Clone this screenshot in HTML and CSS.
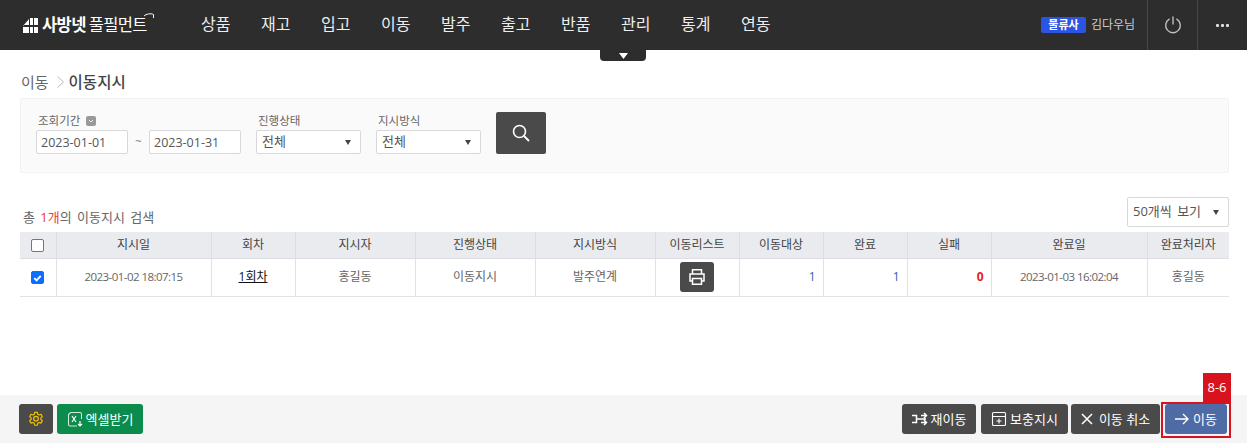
FILE: index.html
```html
<!DOCTYPE html>
<html lang="ko">
<head>
<meta charset="utf-8">
<title>이동지시</title>
<link rel="stylesheet" href="styles.css">
</head>
<body>
<header class="top">
  <div class="logo">
    <svg class="logo-mark" viewBox="0 0 16 15" width="16" height="15"><path fill="#fff" d="M0 8 6 1v6H0Zm0 1h6v6H0Zm7-9h3v7H7Zm0 9h3v6H7Zm4-9h4v7h-4Zm0 9h4v6h-4Z"/></svg>
    <b class="logo-a">사방넷</b><span class="logo-b">풀필먼트</span>
    <svg class="logo-hook" viewBox="0 0 12 9" width="12" height="9"><path fill="none" stroke="#fff" d="M1 3C3 1 8 0 10.500 1.500V5"/></svg>
  </div>
  <nav class="menu">
    <a>상품</a><a>재고</a><a>입고</a><a>이동</a><a>발주</a><a>출고</a><a>반품</a><a>관리</a><a>통계</a><a>연동</a>
  </nav>
  <div class="user">
    <span class="tag">물류사</span><span class="name">김다우님</span>
    <span class="iconcell">
      <svg viewBox="0 0 18 18" width="18" height="18"><path fill="none" stroke="#bdbdbd" stroke-width="1.400" stroke-linecap="round" d="M5.200 3.200a7.300 7.300 0 1 0 7.600 0M9 1v7"/></svg>
    </span>
    <span class="iconcell dots"><i></i><i></i><i></i></span>
  </div>
  <span class="fold"><svg viewBox="0 0 9 6" width="9" height="6"><path fill="#fff" d="M0 0h9L4.500 6Z"/></svg></span>
</header>

<main class="page">
  <div class="crumb"><span>이동</span><svg viewBox="0 0 7 12" width="7" height="12"><path fill="none" stroke="#bbb" d="m.5.500 6 5.500-6 5.500"/></svg><b>이동지시</b></div>

  <section class="search">
    <div class="field">
      <label>조회기간 <svg class="chev" viewBox="0 0 10 10" width="10" height="10"><rect width="10" height="10" rx="2" fill="#999"/><path d="m3 4 2 2 2-2" fill="none" stroke="#fff" stroke-width=".8"/></svg></label>
      <div class="dates"><span class="input">2023-01-01</span><span class="tilde">~</span><span class="input">2023-01-31</span></div>
    </div>
    <div class="field"><label>진행상태</label><span class="select">전체<em></em></span></div>
    <div class="field"><label>지시방식</label><span class="select">전체<em></em></span></div>
    <button class="go"><svg viewBox="0 0 18 18" width="18" height="18"><circle cx="7.500" cy="7.500" r="6" fill="none" stroke="#fff" stroke-width="1.600"/><path d="m12 12 5 5" stroke="#fff" stroke-width="1.800"/></svg></button>
  </section>

  <div class="listbar">
    <p class="count">총 <span>1개</span>의 이동지시 검색</p>
    <span class="select per">50개씩 보기<em></em></span>
  </div>

  <table class="grid">
    <colgroup>
      <col class="c0"><col class="c1"><col class="c2"><col class="c3"><col class="c3"><col class="c3"><col class="c4"><col class="c4"><col class="c4"><col class="c4"><col class="c5"><col class="c6">
    </colgroup>
    <thead>
      <tr><th><span class="chk"></span></th><th>지시일</th><th>회차</th><th>지시자</th><th>진행상태</th><th>지시방식</th><th>이동리스트</th><th>이동대상</th><th>완료</th><th>실패</th><th>완료일</th><th>완료처리자</th></tr>
    </thead>
    <tbody>
      <tr>
        <td><span class="chk on"><svg viewBox="0 0 12 12" width="12" height="12"><path d="m2.500 6.200 2.500 2.500 4.500-5" fill="none" stroke="#fff" stroke-width="2"/></svg></span></td>
        <td class="tight">2023-01-02 18:07:15</td>
        <td><a class="link">1회차</a></td>
        <td>홍길동</td><td>이동지시</td><td>발주연계</td>
        <td><span class="print"><svg viewBox="0 0 18 18" width="18" height="18"><path fill="none" stroke="#fff" stroke-width="1.500" d="M4.500 6V1.800h9V6M4.500 13H2V6h14v7h-2.500M4.500 10.500h9v5.700h-9z"/></svg></span></td>
        <td class="num">1</td><td class="num">1</td><td class="num fail">0</td>
        <td class="tight">2023-01-03 16:02:04</td><td>홍길동</td>
      </tr>
    </tbody>
  </table>
</main>

<footer class="foot">
  <div class="group">
    <button class="btn gear"><svg viewBox="0 0 18 18" width="16" height="16"><path fill="none" stroke="#f5c400" stroke-width="1.300" stroke-linejoin="round" d="M7.500 1.500h3l.5 2.200 1.500.8 2.100-.8 1.500 2.600L14.500 7.800v1.700l1.600 1.500-1.500 2.600-2.100-.7-1.500.9-.5 2.200h-3l-.5-2.200-1.500-.9-2.100.7L1.900 11l1.600-1.500V7.800L1.900 6.300l1.500-2.600 2.100.8L7 3.700Z"/><circle cx="9" cy="8.700" r="2.600" fill="none" stroke="#f5c400" stroke-width="1.300"/></svg></button>
    <button class="btn excel"><svg viewBox="0 0 16 16" width="16" height="16"><path fill="none" stroke="#cfe8d9" stroke-width="1.100" d="M10 15H3a1.500 1.500 0 0 1-1.500-1.500v-10L3.500 1.500H13A1.500 1.500 0 0 1 14.500 3v5"/><path fill="none" stroke="#fff" stroke-width="1.200" d="m5 5 4 6M9 5l-4 6M13 10v5M11 13l2 2 2-2"/></svg>엑셀받기</button>
  </div>
  <div class="group right">
    <button class="btn dark b1"><svg viewBox="0 0 16 14" width="16" height="14"><path fill="none" stroke="#fff" stroke-width="1.500" d="M0 3.500h4.500v7H0M4.500 7H14M9 3.500h5M9 10.500h5M12 1l2.500 2.500L12 6M12 8l2.500 2.500L12 13"/></svg>재이동</button>
    <button class="btn dark b2"><svg viewBox="0 0 16 16" width="16" height="16"><path fill="none" stroke="#fff" stroke-width="1.100" d="M1.500 5.500h13v8a1 1 0 0 1-1 1h-11a1 1 0 0 1-1-1v-11a1 1 0 0 1 1-1h11a1 1 0 0 1 1 1v3M8 7.500v5M5.500 10h5"/></svg>보충지시</button>
    <button class="btn dark b3"><svg viewBox="0 0 12 12" width="12" height="12"><path stroke="#fff" stroke-width="1.500" d="m1 1 10 10M11 1 1 11"/></svg>이동 취소</button>
    <div class="mark">
      <span class="badge">8-6</span>
      <button class="btn blue"><svg viewBox="0 0 14 12" width="14" height="12"><path fill="none" stroke="#fff" stroke-width="1.400" d="M0 6h13M8 1l5 5-5 5"/></svg>이동</button>
    </div>
  </div>
</footer>
</body>
</html>
```
FILE: styles.css
```css
* { box-sizing: border-box; }
html, body { margin: 0; height: 100%; }
body {
  display: flex;
  flex-direction: column;
  height: 443px;
  overflow: hidden;
  background: #fff;
  color: #555;
  font: 12px/1.2 "Open Sans", "Noto Sans CJK KR", sans-serif;
}
.top {
  position: relative;
  flex: none;
  height: 50px;
  display: flex;
  align-items: center;
  padding-left: 23px;
  background: #2d2d2d;
  color: #fff;
}
.logo { position: relative; display: flex; align-items: center; width: 178px; height: 50px; }
.logo-mark { margin-right: 3px; }
.logo-a { font-size: 16.500px; font-weight: 700; letter-spacing: -.6px; margin-right: 3px; }
.logo-b { font-size: 16.500px; font-weight: 400; letter-spacing: -.7px; }
.logo-hook { position: absolute; left: 120px; top: 13px; }
.menu { display: flex; gap: 30px; font-size: 16px; color: #eee; }
.menu a { display: block; width: 30px; white-space: nowrap; }
.user { margin-left: auto; display: flex; align-items: center; height: 50px; }
.tag { width: 45px; height: 16px; margin-right: 5px; border-radius: 2px; background: #2b53e4; color: #fff; font-size: 11px; font-weight: 700; line-height: 16px; text-align: center; }
.name { width: 56px; color: #ccc; font-size: 12px; }
.iconcell { display: flex; align-items: center; justify-content: center; gap: 2px; width: 50px; height: 50px; border-left: 1px solid #484848; }
.dots i { width: 3px; height: 3px; border-radius: 1px; background: #ddd; }
.fold { position: absolute; left: 600px; top: 50px; display: flex; align-items: center; justify-content: center; width: 46px; height: 11px; border-radius: 0 0 4px 4px; background: #2d2d2d; }

.page { flex: 1; padding: 23px 18px 0 20px; }
.crumb { display: flex; align-items: center; gap: 8px; height: 18px; padding-left: 1px; font-size: 15px; color: #666; }
.crumb b { color: #444; font-size: 15.500px; font-weight: 500; margin-left: -3px; }
.search { display: flex; align-items: flex-start; height: 75px; margin-top: 7px; padding: 13px 15px; background: #fafafa; border: 1px solid #f2f2f2; border-radius: 2px; }
.field { display: flex; flex-direction: column; margin-right: 15px; }
.field label { display: flex; align-items: center; gap: 5px; height: 18px; padding-left: 2px; padding-bottom: 1px; font-size: 11.500px; color: #666; }
.chev { margin-left: 1px; }
.dates { display: flex; align-items: center; }
.input, .select { display: flex; align-items: center; height: 24px; background: #fff; border: 1px solid #d9d9d9; border-radius: 2px; color: #555; font-size: 12.500px; }
.input { width: 92px; padding-left: 4px; }
.tilde { width: 21px; text-align: center; color: #777; font-size: 11px; padding-bottom: 3px; }
.select { position: relative; width: 105px; padding-left: 5px; font-size: 13px; }
.select em { position: absolute; right: 9px; top: 50%; margin-top: -2px; border: 3.500px solid transparent; border-top: 5px solid #444; border-bottom: 0; }
.go { display: flex; align-items: center; justify-content: center; width: 50px; height: 42px; padding: 0; border: 0; border-radius: 2px; background: #4a4a4a; }

.listbar { display: flex; justify-content: space-between; align-items: flex-start; height: 35px; margin-top: 24px; }
.count { margin: 13px 0 0 3px; font-size: 13px; word-spacing: 2px; color: #666; }
.count span { color: #e8403a; }
.per { width: 102px; height: 30px; word-spacing: 2px; }
.grid { width: 1209px; table-layout: fixed; border-collapse: collapse; }
.c0 { width: 36px; } .c1 { width: 155px; } .c2 { width: 84px; } .c3 { width: 120px; } .c4 { width: 84px; } .c5 { width: 156px; } .c6 { width: 82px; }
.grid th { height: 26px; padding: 0; background: #e9ebef; border-right: 1px solid #dcdee2; border-bottom: 1px solid #dcdee2; color: #444; font-size: 12px; font-weight: 400; }
.grid td { height: 38px; padding: 0 8px; border-right: 1px solid #e2e2e2; border-bottom: 1px solid #e2e2e2; text-align: center; color: #666; font-size: 12px; }
.grid th:last-child, .grid td:last-child { border-right: 0; }
.grid td:first-child { padding: 0; }
.chk { display: inline-flex; align-items: center; justify-content: center; width: 13px; height: 13px; vertical-align: middle; background: #fff; border: 1px solid #767676; border-radius: 2px; }
.chk.on { background: #0d6efd; border-color: #0d6efd; }
.tight { letter-spacing: -.55px; font-size: 11.500px !important; }
.link { color: #111; text-decoration: underline; }
.print { display: inline-flex; align-items: center; justify-content: center; width: 34px; height: 30px; vertical-align: middle; border-radius: 3px; background: #4a4a4a; }
.grid .num { padding-right: 7px; text-align: right; color: #2f62b0; }
.grid .fail { color: #e8202a; font-weight: 700; }

.foot { flex: none; display: flex; justify-content: space-between; align-items: flex-start; height: 48px; padding: 9px 20px 0 19px; background: #f5f5f5; }
.group { display: flex; gap: 4px; }
.right { gap: 5px; }
.btn { display: flex; align-items: center; justify-content: center; gap: 3px; height: 30px; padding: 0; border: 0; border-radius: 3px; color: #fff; font: 400 13px/1 "Open Sans", "Noto Sans CJK KR", sans-serif; }
.gear { width: 34px; background: #4a4a4a; }
.excel { width: 86px; background: #0b8b4c; }
.dark { background: #4a4a4a; }
.b1 { width: 74px; }
.b2 { width: 87px; }
.b3 { width: 89px; gap: 6px; margin-left: -2px; }
.mark { position: relative; width: 62px; height: 30px; }
.mark::before { content: ""; position: absolute; left: -4px; top: -2px; right: -4px; bottom: -4px; border: 2px solid #d9131e; }
.badge { position: absolute; left: 38px; top: -31px; width: 28px; height: 29px; background: #d9131e; color: #fff; font-size: 13px; font-weight: 500; line-height: 29px; text-align: center; }
.blue { position: relative; width: 62px; background: #4f6ba6; gap: 4px; }
```
